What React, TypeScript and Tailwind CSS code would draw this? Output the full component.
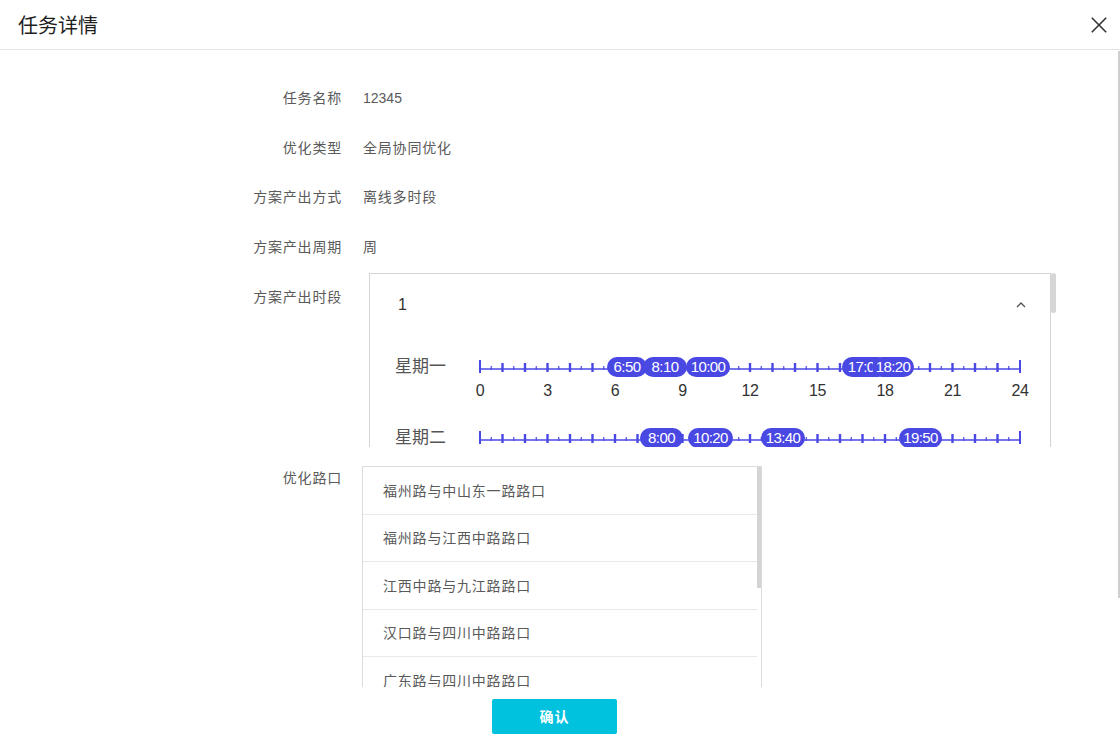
import React from "react";

const FONT = { fontFamily: '"Liberation Sans", "Noto Sans CJK SC", sans-serif' };
const NUMFONT = '"Liberation Sans", sans-serif';
const BLUE = "#4a48e3";
const UNIT = 11.25; // px per half hour

type Badge = { t: string; left: number; w: number };

const rows: { day: string; badges: Badge[]; axis: boolean }[] = [
  {
    day: "星期一",
    axis: true,
    badges: [
      { t: "6:50", left: 128, w: 40 },
      { t: "8:10", left: 164, w: 44 },
      { t: "10:00", left: 207, w: 44 },
      { t: "17:00", left: 363, w: 46 },
      { t: "18:20", left: 393, w: 42 },
    ],
  },
  {
    day: "星期二",
    axis: false,
    badges: [
      { t: "8:00", left: 161, w: 43 },
      { t: "10:20", left: 209, w: 45 },
      { t: "13:40", left: 282, w: 44 },
      { t: "19:50", left: 420, w: 43 },
    ],
  },
];

function Timeline({ axis }: { axis: boolean }) {
  const ly = 34;
  const ticks = [];
  for (let i = 0; i <= 48; i++) {
    const x = 1 + i * UNIT;
    if (i === 0 || i === 48) {
      ticks.push(<line key={i} x1={x} x2={x} y1={ly - 9} y2={ly + 4} stroke={BLUE} strokeWidth={2} />);
    } else if (i % 2 === 0) {
      ticks.push(<line key={i} x1={x} x2={x} y1={ly - 6} y2={ly + 3} stroke={BLUE} strokeWidth={2.4} />);
    } else {
      ticks.push(<line key={i} x1={x} x2={x} y1={ly - 3} y2={ly + 1} stroke={BLUE} strokeWidth={1.2} />);
    }
  }
  const labels = [0, 3, 6, 9, 12, 15, 18, 21, 24];
  return (
    <svg width={560} height={71} className="block overflow-visible">
      <line x1={1} x2={1 + 48 * UNIT} y1={ly} y2={ly} stroke={BLUE} strokeWidth={1.5} />
      {ticks}
      {axis &&
        labels.map((h) => (
          <text
            key={h}
            x={1 + h * 2 * UNIT}
            y={61}
            textAnchor="middle"
            fontSize={16}
            fill="#333"
            style={{ fontFamily: NUMFONT, letterSpacing: "-0.5px" }}
          >
            {h}
          </text>
        ))}
    </svg>
  );
}

const crossings = [
  "福州路与中山东一路路口",
  "福州路与江西中路路口",
  "江西中路与九江路路口",
  "汉口路与四川中路路口",
  "广东路与四川中路路口",
];

export default function App() {
  return (
    <div className="relative w-[1120px] h-[743px] bg-white overflow-hidden flex flex-col" style={FONT}>
      {/* header */}
      <div className="h-[50px] shrink-0 border-b border-[#e4e4e4] flex items-center justify-between pl-[18px] pr-[13px]">
        <span className="text-[20px] text-[#1f1f1f]" style={{ fontFamily: '"Noto Sans CJK SC", sans-serif' }}>
          任务详情
        </span>
        <svg width="16" height="16" viewBox="0 0 16 16" className="mt-[1px]">
          <line x1="0.8" y1="0.8" x2="15.2" y2="15.2" stroke="#333" strokeWidth="1.6" />
          <line x1="15.2" y1="0.8" x2="0.8" y2="15.2" stroke="#333" strokeWidth="1.6" />
        </svg>
      </div>

      {/* body scrollbar */}
      <div className="absolute right-0 top-[51px] h-[547px] w-[2px] bg-[#cfcfcf]" />

      {/* content */}
      <div
        className="flex flex-col pt-[23px] text-[14px] text-[#5a5a5a] tracking-[0.8px]"
        style={{ fontFamily: '"Noto Sans CJK SC", sans-serif' }}
      >
        {[
          ["任务名称", "12345"],
          ["优化类型", "全局协同优化"],
          ["方案产出方式", "离线多时段"],
          ["方案产出周期", "周"],
        ].map(([l, v]) => (
          <div key={l} className="h-[49.5px] flex items-center">
            <div className="w-[342px] text-right">{l}</div>
            <div
              className="ml-[21px]"
              style={
                l === "任务名称"
                  ? { fontFamily: '"Liberation Sans", sans-serif', letterSpacing: 0, marginTop: 1 }
                  : undefined
              }
            >
              {v}
            </div>
          </div>
        ))}

        {/* 方案产出时段 */}
        <div className="flex items-start mt-[2px]">
          <div className="w-[342px] text-right h-[46px] flex items-center justify-end">方案产出时段</div>
          <div className="ml-[27px] relative w-[687px] h-[174px] overflow-hidden">
            <div className="w-[682px] border-t border-l border-r border-[#d4d4d4] h-[400px] tracking-normal">
              <div className="h-[61px] flex items-center justify-between pl-[28px] pr-[24px]">
                <span className="text-[16px] text-[#333]" style={{ fontFamily: '"Liberation Sans", sans-serif' }}>
                  1
                </span>
                <svg width="10" height="7" viewBox="0 0 10 7">
                  <polyline points="1,6 5,2 9,6" fill="none" stroke="#555" strokeWidth="1.4" />
                </svg>
              </div>
              {rows.map((r) => (
                <div key={r.day} className="h-[71px] flex items-start pl-[25px]">
                  <div className="w-[84px] mt-[19px] leading-[22px] text-[17px] text-[#555]">{r.day}</div>
                  <div className="relative">
                    <Timeline axis={r.axis} />
                    {r.badges.map((b) => (
                      <div
                        key={b.t}
                        className="absolute top-[22px] h-[20px] rounded-full bg-[#4a48e3] text-white text-[15px] leading-[20px] tracking-[-0.6px] flex items-center justify-center overflow-hidden whitespace-nowrap"
                        style={{ left: b.left, width: b.w, fontFamily: NUMFONT }}
                      >
                        {b.t}
                      </div>
                    ))}
                  </div>
                </div>
              ))}
            </div>
            <div className="absolute right-0 top-0 w-[5px] h-[40px] rounded-[3px] bg-[#d6d6d6]" />
          </div>
        </div>

        {/* 优化路口 */}
        <div className="flex items-start mt-[19px]">
          <div className="w-[342px] text-right leading-[22px]">优化路口</div>
          <div className="ml-[20px] relative w-[400px] h-[221px] overflow-hidden border-t border-l border-r border-[#dcdcdc]">
            <div className="w-[394px]">
              {crossings.map((c) => (
                <div key={c} className="h-[47.5px] border-b border-[#e9e9e9] flex items-center pl-[20px]">
                  {c}
                </div>
              ))}
            </div>
            <div className="absolute right-0 top-0 w-[4px] h-[121px] bg-[#d4d4d4]" />
          </div>
        </div>

        {/* footer */}
        <div className="mt-[12px] pl-[492px]">
          <button className="w-[125px] h-[35px] rounded-[2px] bg-[#00c1de] text-white text-[14px] font-bold tracking-[1px]">
            确认
          </button>
        </div>
      </div>
    </div>
  );
}
